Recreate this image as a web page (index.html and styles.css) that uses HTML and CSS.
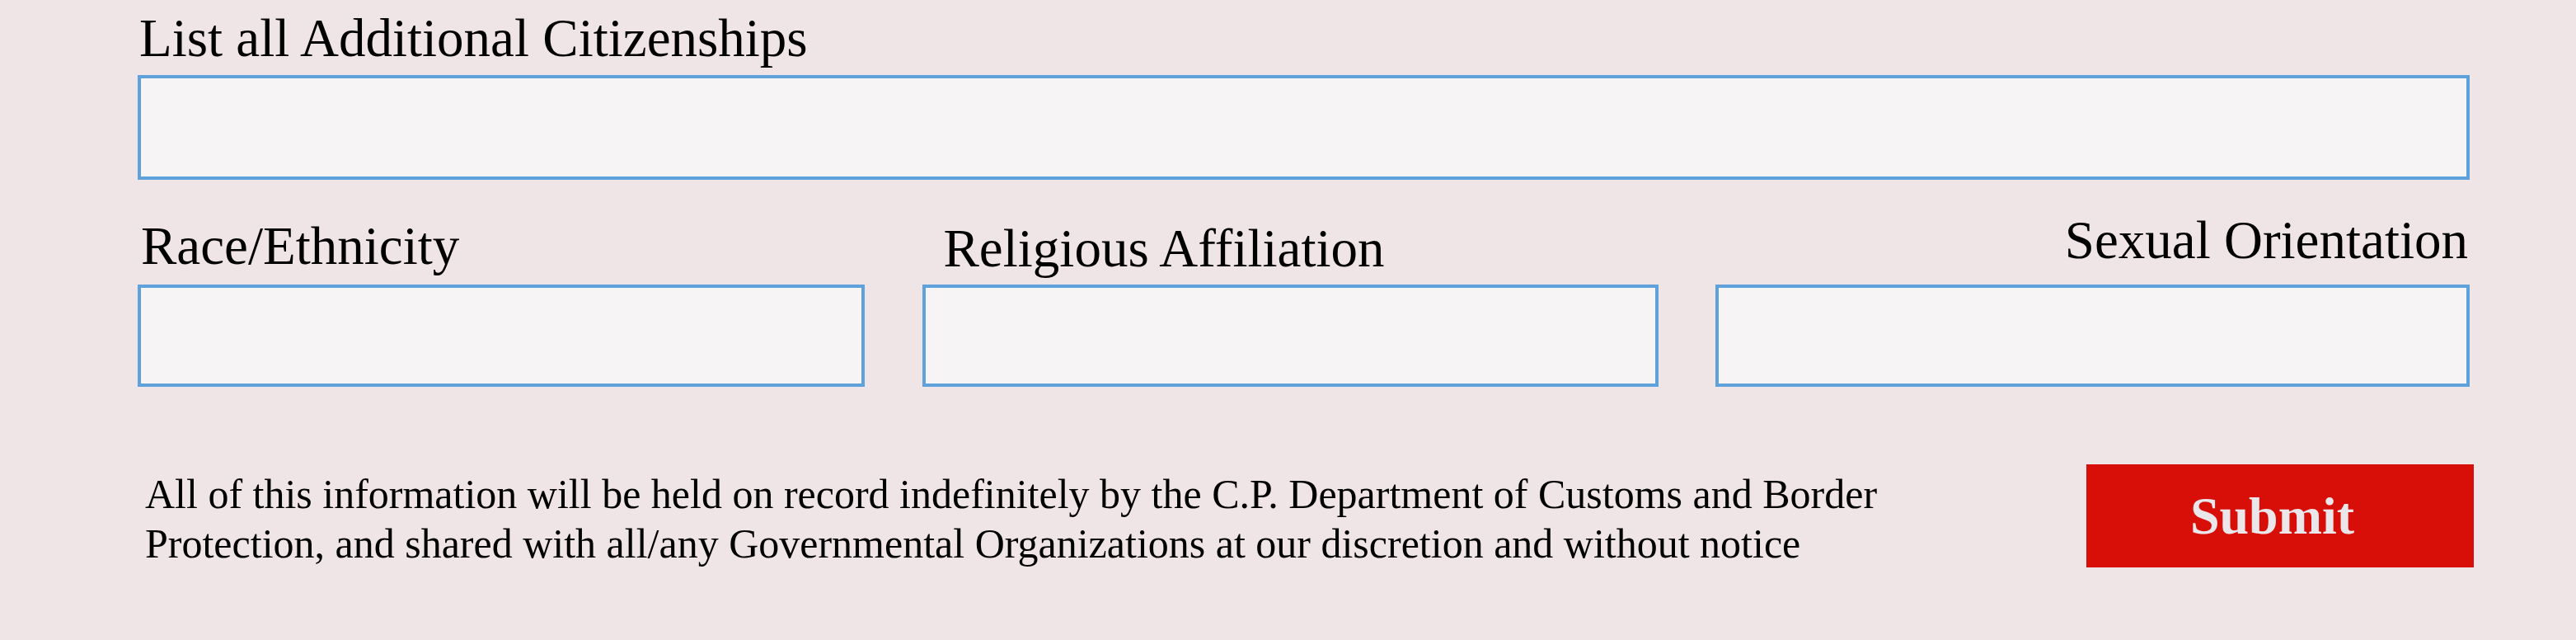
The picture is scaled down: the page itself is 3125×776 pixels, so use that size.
FILE: index.html
```html
<!DOCTYPE html>
<html lang="en">
<head>
<meta charset="utf-8">
<title>Additional Information</title>
<link rel="stylesheet" href="styles.css">
</head>
<body>
<form class="form">
  <div class="field">
    <label class="label label-wide">List all Additional Citizenships</label>
    <input class="box box-wide" type="text">
  </div>
  <div class="row">
    <div class="col col-race">
      <label class="label label-race">Race/Ethnicity</label>
      <input class="box" type="text">
    </div>
    <div class="col col-religion">
      <label class="label label-religion">Religious Affiliation</label>
      <input class="box" type="text">
    </div>
    <div class="col col-orientation">
      <label class="label label-orientation">Sexual Orientation</label>
      <input class="box" type="text">
    </div>
  </div>
  <div class="footer">
    <p class="notice">All of this information will be held on record indefinitely by the C.P. Department of Customs and Border Protection, and shared with all/any Governmental Organizations at our discretion and without notice</p>
    <button class="submit" type="button">Submit</button>
  </div>
</form>
</body>
</html>
```

FILE: styles.css
```css
html, body {
  margin: 0;
  padding: 0;
}

body {
  background: #efe4e6;
  font-family: "Liberation Serif", "Times New Roman", serif;
  color: #000;
  width: 3125px;
  height: 776px;
  overflow: hidden;
}

.form {
  box-sizing: border-box;
  width: 3125px;
  padding: 10px 0 0 167px;
}

.field {
  display: flex;
  flex-direction: column;
  width: 2829px;
}

.label {
  display: block;
  font-size: 65px;
  line-height: 72px;
  white-space: nowrap;
}

.label-wide {
  padding-left: 2px;
}

.box {
  box-sizing: border-box;
  display: block;
  width: 100%;
  margin: 0;
  padding: 0;
  background: #f6f4f5;
  border: 4px solid #5fa2db;
  border-radius: 0;
  outline: none;
  font: inherit;
  height: 124px;
}

.box-wide {
  margin-top: 9px;
  height: 127px;
}

.row {
  display: grid;
  grid-template-columns: 882px 893px 915px;
  justify-content: space-between;
  align-items: end;
  width: 2829px;
  margin-top: 37px;
}

.col {
  display: flex;
  flex-direction: column;
}

.label-race {
  padding-left: 4px;
  margin-bottom: 11px;
}

.label-religion {
  padding-left: 26px;
  margin-bottom: 8px;
}

.label-orientation {
  text-align: right;
  padding-right: 2px;
  margin-bottom: 18px;
}

.footer {
  display: flex;
  justify-content: space-between;
  align-items: flex-start;
  width: 2834px;
  margin-top: 94px;
}

.notice {
  margin: 6px 0 0 0;
  padding-left: 9px;
  width: 2200px;
  font-size: 50px;
  line-height: 60px;
}

.submit {
  box-sizing: border-box;
  width: 470px;
  height: 125px;
  margin: 0;
  padding: 0 19px 0 0;
  border: none;
  border-radius: 0;
  background: #d70f08;
  color: #ebe6ea;
  font-family: "Liberation Serif", "Times New Roman", serif;
  font-weight: bold;
  font-size: 64px;
  line-height: 125px;
  text-align: center;
}
```
